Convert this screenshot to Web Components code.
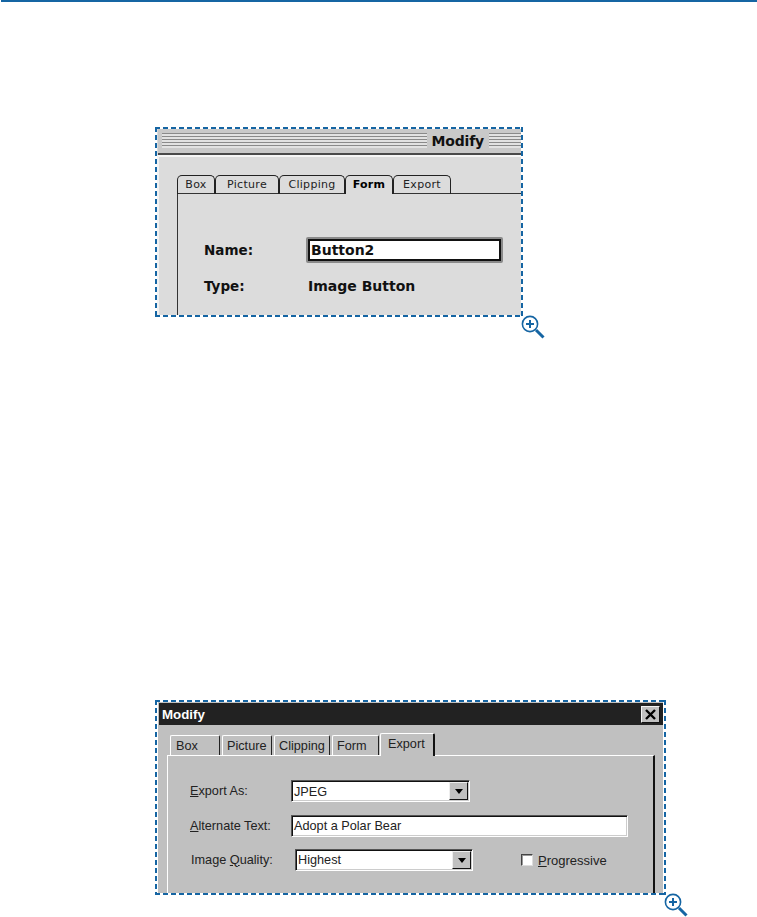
<!DOCTYPE html>
<html><head><meta charset="utf-8">
<style>
html,body{margin:0;background:#fff}
body{width:757px;height:917px;overflow:hidden}
</style></head>
<body>
<x-topbar></x-topbar>
<x-figure style="--w:368px;--h:190px;margin-top:125px;margin-left:155px">
  <x-mac-window>
    <x-mac-tab slot="tabs">Box</x-mac-tab>
    <x-mac-tab slot="tabs" style="--tw:64px">Picture</x-mac-tab>
    <x-mac-tab slot="tabs" style="--tw:66px">Clipping</x-mac-tab>
    <x-mac-tab slot="tabs" style="--tw:48px" active>Form</x-mac-tab>
    <x-mac-tab slot="tabs" style="--tw:58px">Export</x-mac-tab>
  </x-mac-window>
</x-figure>
<x-figure style="--w:511px;--h:195px;margin-top:383px;margin-left:155px">
  <x-win-window>
    <x-win-tab slot="tabs" style="--tw:50px;--px:5px">Box</x-win-tab>
    <x-win-tab slot="tabs" style="--tw:50px;--px:4px">Picture</x-win-tab>
    <x-win-tab slot="tabs" style="--tw:56px;--px:4px">Clipping</x-win-tab>
    <x-win-tab slot="tabs" style="--tw:47px;--px:4px;--mr:1px">Form</x-win-tab>
    <x-win-tab slot="tabs" style="--tw:55px;--px:7px" active>Export</x-win-tab>
    <x-win-row style="--mt:24px;--lw:101px;--lp:1px"><span slot="label"><u>E</u>xport As:</span><x-win-select style="--fw:179px;--tp:2px" value="JPEG"></x-win-select></x-win-row>
    <x-win-row style="--mt:13px;--lw:101px"><span slot="label"><u>A</u>lternate Text:</span><x-win-field style="--fw:337px" value="Adopt a Polar Bear"></x-win-field></x-win-row>
    <x-win-row style="--mt:12px;--lw:104px;--ml:1px"><span slot="label">Image <u>Q</u>uality:</span><x-win-select style="--fw:178px" value="Highest"></x-win-select><x-win-check style="margin-left:48px"><u>P</u>rogressive</x-win-check></x-win-row>
  </x-win-window>
</x-figure>
<script>
function def(name, html){
  customElements.define(name, class extends HTMLElement{
    constructor(){super();const s=this.attachShadow({mode:'open'});s.innerHTML=html;}
    connectedCallback(){const s=this.shadowRoot;s.querySelectorAll('[data-v]').forEach(e=>e.textContent=this.getAttribute('value')||'');}
  });
}
const BLUE='#1565a3';
def('x-topbar',`<style>:host{display:block;height:2px;margin-left:1px;background:${BLUE}}</style>`);
def('x-figure',`<style>
:host{display:block;position:relative;box-sizing:border-box;width:var(--w);height:var(--h);padding:2px;
background:
 repeating-linear-gradient(90deg,${BLUE} 0 5px,transparent 5px 8px) 0 0/100% 2px no-repeat,
 repeating-linear-gradient(90deg,${BLUE} 0 5px,transparent 5px 8px) 0 100%/100% 2px no-repeat,
 repeating-linear-gradient(180deg,${BLUE} 0 5px,transparent 5px 8px) 0 0/2px 100% no-repeat,
 repeating-linear-gradient(180deg,${BLUE} 0 5px,transparent 5px 8px) 100% 0/2px 100% no-repeat;}
.in{height:100%;overflow:hidden}
svg{position:absolute;right:-22px;bottom:-22px;width:24px;height:24px}
</style><div class="in"><slot></slot></div>
<svg viewBox="0 0 24 24" fill="none" stroke="${BLUE}"><circle cx="9" cy="9" r="7.6" stroke-width="1.6"/><path d="M5 9h8M9 5v8" stroke-width="2"/><path d="M15 15l7.5 7.5" stroke-width="3"/></svg>`);
def('x-mac-window',`<style>
:host{display:flex;flex-direction:column;height:100%;background:#dcdcdc;font-family:"DejaVu Sans",sans-serif;color:#111}
.title{display:flex;align-items:center;box-sizing:border-box;height:26px;margin-left:1px;padding:4px 0 5px 4px;background:#c9c9c9;border-bottom:2px solid #4a4a4a}
.st{height:15px;background:repeating-linear-gradient(180deg,#8a8a8a 0 1px,#e2e2e2 1px 3px)}
.st.a{flex:1}.st.b{width:32px}
.t{font-weight:700;font-size:14px;line-height:15px;padding:0 5px;letter-spacing:-.2px;position:relative;top:1px}
.body{flex:1;min-height:0;border-top:2px solid #f6f6f6;border-left:2px solid #f2f2f2;padding:18px 0 0 18px;display:flex;flex-direction:column}
.tabs{display:flex;height:18px;border-bottom:1px solid #333;box-sizing:content-box}
.pane{flex:1;border-left:1px solid #333;padding:43px 0 0 26px;font-weight:700}
.row{display:flex;align-items:center}
.row.n{height:26px}.row.y{height:20px;margin-top:13px}
.l{width:102px;font-size:13.5px}
.inp{box-sizing:border-box;width:197px;height:26px;border:2px solid #8a8a8a;border-radius:2px;}
.inp div{box-sizing:border-box;height:100%;border:2px solid #111;background:#fff;padding-left:1px;font-size:14px;line-height:18px}
.v{font-size:14px;margin-left:2px}
</style>
<div class="title"><div class="st a"></div><div class="t">Modify</div><div class="st b"></div></div>
<div class="body"><div class="tabs"><slot name="tabs"></slot></div>
<div class="pane"><div class="row n"><div class="l">Name:</div><div class="inp"><div>Button2</div></div></div>
<div class="row y"><div class="l">Type:</div><div class="v">Image Button</div></div></div></div>`);
def('x-mac-tab',`<style>
:host{display:block;box-sizing:border-box;width:var(--tw,38px);height:19px;border:1px solid #222;border-bottom:0;border-radius:5px 5px 0 0;text-align:center;font:11px/17px "DejaVu Sans",sans-serif;letter-spacing:.3px;color:#222;position:relative}
:host([active]){font-weight:700;background:#dcdcdc;z-index:1;color:#000}
</style><slot></slot>`);
def('x-win-window',`<style>
:host{display:flex;flex-direction:column;height:100%;margin:0 1px;background:#c0c0c0;font:12.7px/15px "Liberation Sans",sans-serif;color:#222}
.title{display:flex;align-items:center;justify-content:space-between;box-sizing:border-box;height:22px;margin:1px 0 0 1px;padding:0 3px 0 3px;background:#222;color:#fff;font-weight:700;font-size:13.3px}
.x{box-sizing:border-box;width:19px;height:17px;background:#c0c0c0;border:1px solid;border-color:#f4f4f4 #111 #111 #f4f4f4;display:flex;align-items:center;justify-content:center}
.tabs{display:flex;align-items:flex-end;height:22px;margin:9px 0 -1px 12px;position:relative;z-index:1}
.pane{flex:1;margin:0 8px 0 9px;border-top:1px solid #fff;border-left:1px solid #fff;border-right:2px solid #111;padding-left:22px}
</style>
<div class="title"><span>Modify</span><span class="x"><svg width="13" height="11" viewBox="0 0 13 11"><path d="M2 1l9 9M11 1l-9 9" stroke="#000" stroke-width="2.4" fill="none"/></svg></span></div>
<div class="tabs"><slot name="tabs"></slot></div>
<div class="pane"><slot></slot></div>`);
def('x-win-tab',`<style>
:host{display:block;box-sizing:border-box;width:var(--tw);height:20px;margin-right:var(--mr,2px);padding:3px 0 0 var(--px);border-top:1px solid #fff;border-left:1px solid #fff;border-right:1px solid #222;border-radius:2px 2px 0 0;white-space:nowrap;margin-bottom:1px}
:host([active]){height:23px;background:#c0c0c0;margin-right:0;padding-top:3px;margin-bottom:0;border-right:2px solid #111}
</style><slot></slot>`);
def('x-win-row',`<style>
:host{display:flex;align-items:center;margin-top:var(--mt);margin-left:var(--ml,0)}
.l{width:var(--lw);flex:none;white-space:nowrap;padding-top:var(--lp,0)}
</style><div class="l"><slot name="label"></slot></div><slot></slot>`);
const sunk=`box-sizing:border-box;height:22px;width:var(--fw);background:#fff;border:1px solid;border-color:#555 #fff #fff #555;box-shadow:inset 1px 1px 0 #111,inset -1px -1px 0 #ccc;`;
def('x-win-select',`<style>
:host{display:block;flex:none;${sunk}font:12.7px/19px "Liberation Sans",sans-serif;color:#222;position:relative;padding:var(--tp,1px) 0 0 2px}
.b{position:absolute;right:1px;top:1px;bottom:1px;width:19px;box-sizing:border-box;background:#c0c0c0;border:1px solid;border-color:#eee #111 #111 #eee;display:flex;align-items:center;justify-content:center}
.b i{display:block;width:0;height:0;border:4px solid transparent;border-top:5px solid #000;border-bottom:0}
</style><span data-v></span><div class="b"><i></i></div>`);
def('x-win-field',`<style>
:host{display:block;flex:none;${sunk}font:12.7px/19px "Liberation Sans",sans-serif;color:#222;padding:1px 0 0 2px}
</style><span data-v></span>`);
def('x-win-check',`<style>
:host{display:flex;align-items:center;gap:5px;flex:none;font-size:13px}
i{display:block;box-sizing:border-box;width:12px;height:12px;background:#fff;border:1px solid;border-color:#444 #ddd #ddd #444;box-shadow:inset 1px 1px 0 #999}
</style><i></i><span><slot></slot></span>`);
</script>
</body></html>
